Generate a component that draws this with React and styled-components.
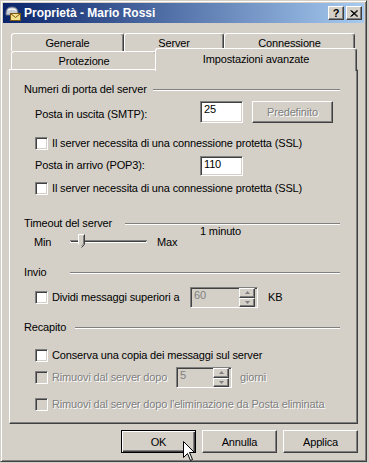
import React from 'react';
import styled, { createGlobalStyle, css } from 'styled-components';

const FONT = '"Liberation Sans", Arial, sans-serif';

const Global = createGlobalStyle`
  html, body { margin: 0; padding: 0; background: #d4d0c8; }
  body { font-family: ${FONT}; font-size: 11px; color: #000; overflow: hidden; }
`;

const raised = css`
  border: 1px solid;
  border-color: #fff #404040 #404040 #fff;
  box-shadow: inset -1px -1px #808080;
`;

const sunken = css`
  border: 1px solid;
  border-color: #808080 #fff #fff #808080;
  box-shadow: inset 1px 1px #404040, inset -1px -1px #d4d0c8;
`;

const Window = styled.div`
  position: relative;
  box-sizing: border-box;
  width: 367px;
  height: 462px;
  background: #d4d0c8;
  border: 1px solid;
  border-color: #d4d0c8 #404040 #404040 #d4d0c8;
  box-shadow: inset 1px 1px #fff, inset -1px -1px #808080;
  padding: 2px;
  display: flex;
  flex-direction: column;
`;

const TitleBar = styled.div`
  height: 20px;
  display: flex;
  align-items: center;
  padding: 0 2px 0 2px;
  background: linear-gradient(to right, #0a246a, #a6caf0);
`;

const TitleText = styled.span`
  flex: 1;
  margin-left: 3px;
  color: #fff;
  font: bold 12px ${FONT};
  white-space: nowrap;
`;

const CaptionButton = styled.div`
  box-sizing: border-box;
  width: 16px;
  height: 14px;
  margin-left: ${p => p.$ml || 0}px;
  background: #d4d0c8;
  ${raised};
  display: flex;
  align-items: center;
  justify-content: center;
  font: bold 11px ${FONT};
  line-height: 12px;
`;

const Body = styled.div`
  flex: 1;
  display: flex;
  flex-direction: column;
  padding: 10px 6px 0 6px;
  letter-spacing: -0.15px;
`;

const TabRow = styled.div`
  display: flex;
  height: 18px;
  margin-left: 2px;
`;

const Tab = styled.div`
  box-sizing: border-box;
  width: ${p => p.$w}px;
  height: 18px;
  flex: none;
  display: flex;
  align-items: center;
  justify-content: center;
  background: #d4d0c8;
  border-top: 1px solid #fff;
  border-left: 1px solid #fff;
  border-right: 1px solid #404040;
  box-shadow: inset -1px 0 #808080;
  border-radius: 3px 3px 0 0;
  white-space: nowrap;
`;

const ActiveTab = styled(Tab)`
  position: relative;
  z-index: 1;
  height: 23px;
  margin: -3px -2px 0 -2px;
  padding-bottom: 3px;
`;

const Panel = styled.div`
  box-sizing: border-box;
  height: 355px;
  border: 1px solid;
  border-color: #fff #404040 #404040 #fff;
  box-shadow: inset -1px -1px #808080;
  padding: 13px 17px 0 14px;
  display: flex;
  flex-direction: column;
`;

const GroupHead = styled.div`
  display: flex;
  align-items: center;
  height: 13px;
  line-height: 13px;
  margin-top: ${p => p.$mt || 0}px;
  white-space: nowrap;
`;

const GroupLabel = styled.span`
  width: ${p => p.$w}px;
  flex: none;
`;

const GroupRule = styled.div`
  flex: 1;
  border-top: 1px solid #808080;
  border-bottom: 1px solid #fff;
`;

const Row = styled.div`
  display: flex;
  align-items: ${p => p.$align || 'center'};
  height: ${p => p.$h}px;
  margin-top: ${p => p.$mt}px;
  margin-left: 11px;
  line-height: 13px;
  white-space: nowrap;
`;

const FieldLabel = styled.span`
  width: ${p => p.$w}px;
  flex: none;
  margin-top: ${p => p.$dy || 0}px;
`;

const Field = styled.div`
  box-sizing: border-box;
  width: ${p => p.$w}px;
  height: ${p => p.$h}px;
  flex: none;
  ${sunken};
  background: ${p => (p.$disabled ? '#d4d0c8' : '#fff')};
  color: ${p => (p.$disabled ? '#808080' : '#000')};
  padding: 1px 3px 0 3px;
  display: flex;
`;

const FieldValue = styled.span`
  flex: 1;
`;

const PushButton = styled.div`
  box-sizing: border-box;
  width: ${p => p.$w || 75}px;
  height: ${p => p.$h || 23}px;
  margin-left: ${p => p.$ml || 0}px;
  flex: none;
  background: #d4d0c8;
  display: flex;
  align-items: center;
  justify-content: center;
  color: ${p => (p.$disabled ? '#808080' : '#000')};
  text-shadow: ${p => (p.$disabled ? '1px 1px #fff' : 'none')};
  ${p =>
    p.$default
      ? css`
          border: 1px solid #000;
          box-shadow: inset 1px 1px #fff, inset -1px -1px #404040, inset -2px -2px #808080;
        `
      : raised};
`;

const CheckItem = styled.div`
  display: flex;
  align-items: center;
  width: ${p => (p.$w ? `${p.$w}px` : 'auto')};
  flex: none;
`;

const Box = styled.span`
  box-sizing: border-box;
  width: 13px;
  height: 13px;
  flex: none;
  ${sunken};
  background: ${p => (p.$disabled ? '#d4d0c8' : '#fff')};
`;

const CheckText = styled.span`
  margin-left: 4px;
  color: ${p => (p.$disabled ? '#808080' : '#000')};
  text-shadow: ${p => (p.$disabled ? '1px 1px #fff' : 'none')};
`;

const Aside = styled.span`
  margin-left: ${p => p.$ml}px;
  color: ${p => (p.$disabled ? '#808080' : '#000')};
  text-shadow: ${p => (p.$disabled ? '1px 1px #fff' : 'none')};
`;

const SpinButtons = styled.div`
  width: 16px;
  margin: -1px -1px 0 0;
  display: flex;
  flex-direction: column;
`;

const SpinButton = styled.div`
  box-sizing: border-box;
  flex: 1;
  ${raised};
  background: #d4d0c8;
  display: flex;
  align-items: center;
  justify-content: center;
`;

const SliderRow = styled.div`
  display: flex;
  height: 24px;
  margin-top: -5px;
  margin-left: 10px;
  line-height: 14px;
  white-space: nowrap;
`;

const SliderLabel = styled.span`
  width: ${p => p.$w}px;
  margin-left: ${p => p.$ml || 0}px;
  align-self: flex-end;
  flex: none;
`;

const SliderValue = styled.span`
  align-self: flex-start;
  line-height: 13px;
`;

const SliderArt = styled.svg`
  align-self: flex-end;
  flex: none;
`;

const Buttons = styled.div`
  display: flex;
  justify-content: flex-end;
  gap: 6px;
  margin-top: 6px;
`;

const Cursor = styled.svg`
  position: absolute;
  left: 182px;
  top: 440px;
`;

function TitleIcon() {
  return (
    <svg width="16" height="16" viewBox="0 0 16 16">
      <path d="M1 8 Q1 2 7 2 Q13 2 13 8 L13 10 L1 10 Z" fill="#c8ccd4" stroke="#6a7388" strokeWidth="1" />
      <path d="M3 5 Q7 3 11 5" fill="none" stroke="#fff" strokeWidth="1" />
      <rect x="5.5" y="8.5" width="10" height="7" fill="#f6e08a" stroke="#7a5a10" />
      <path d="M5.5 8.5 L10.5 12.5 L15.5 8.5" fill="none" stroke="#7a5a10" />
    </svg>
  );
}

function CloseGlyph() {
  return (
    <svg width="8" height="7" viewBox="0 0 8 7">
      <path d="M0.5 0.5 L7 6.5 M1.5 0.5 L8 6.5 M7 0.5 L0.5 6.5 M8 0.5 L1.5 6.5" stroke="#000" strokeWidth="1" />
    </svg>
  );
}

function Arrow({ up }) {
  return (
    <svg width="5" height="3" viewBox="0 0 5 3">
      <path d={up ? 'M2.5 0 L5 3 L0 3 Z' : 'M0 0 L5 0 L2.5 3 Z'} fill="#808080" />
    </svg>
  );
}

function Spinner({ value, w }) {
  return (
    <Field $w={w} $h={21} $disabled>
      <FieldValue>{value}</FieldValue>
      <SpinButtons>
        <SpinButton><Arrow up /></SpinButton>
        <SpinButton><Arrow /></SpinButton>
      </SpinButtons>
    </Field>
  );
}

function Check({ children, disabled, w }) {
  return (
    <CheckItem $w={w}>
      <Box $disabled={disabled} />
      <CheckText $disabled={disabled}>{children}</CheckText>
    </CheckItem>
  );
}

function Group({ label, w, mt }) {
  return (
    <GroupHead $mt={mt}>
      <GroupLabel $w={w}>{label}</GroupLabel>
      <GroupRule />
    </GroupHead>
  );
}

export default function App() {
  return (
    <>
      <Global />
      <Window>
        <TitleBar>
          <TitleIcon />
          <TitleText>Proprietà - Mario Rossi</TitleText>
          <CaptionButton>?</CaptionButton>
          <CaptionButton $ml={2}><CloseGlyph /></CaptionButton>
        </TitleBar>
        <Body>
          <TabRow>
            <Tab $w={113}>Generale</Tab>
            <Tab $w={100}>Server</Tab>
            <Tab $w={131}>Connessione</Tab>
          </TabRow>
          <TabRow>
            <Tab $w={146}>Protezione</Tab>
            <ActiveTab $w={202}>Impostazioni avanzate</ActiveTab>
          </TabRow>
          <Panel>
            <Group label="Numeri di porta del server" w={129} />
            <Row $h={22} $mt={5} $align="flex-start">
              <FieldLabel $w={165} $dy={7}>Posta in uscita (SMTP):</FieldLabel>
              <Field $w={43} $h={22}>
                <FieldValue>25</FieldValue>
              </Field>
              <PushButton $w={81} $h={22} $ml={9} $disabled>Predefinito</PushButton>
            </Row>
            <Row $h={13} $mt={14}>
              <Check>Il server necessita di una connessione protetta (SSL)</Check>
            </Row>
            <Row $h={20} $mt={6} $align="flex-start">
              <FieldLabel $w={165} $dy={3}>Posta in arrivo (POP3):</FieldLabel>
              <Field $w={43} $h={20}>
                <FieldValue>110</FieldValue>
              </Field>
            </Row>
            <Row $h={13} $mt={6}>
              <Check>Il server necessita di una connessione protetta (SSL)</Check>
            </Row>

            <Group label="Timeout del server" w={101} mt={22} />
            <SliderRow>
              <SliderLabel $w={36}>Min</SliderLabel>
              <SliderArt width="77" height="16" viewBox="0 0 77 16">
                <rect x="0" y="7" width="77" height="1" fill="#808080" />
                <rect x="1" y="8" width="75" height="1" fill="#404040" />
                <rect x="0" y="9" width="77" height="1" fill="#fff" />
                <path d="M8.5 1.5 L14.5 1.5 L14.5 11.5 L11.5 14.5 L8.5 11.5 Z" fill="#d4d0c8" />
                <path d="M8.5 11.5 L8.5 1.5 L14.5 1.5" fill="none" stroke="#fff" />
                <path d="M14.5 1.5 L14.5 11.5 L11.5 14.5" fill="none" stroke="#404040" />
                <path d="M13.5 2.5 L13.5 11 L11.5 13" fill="none" stroke="#808080" />
              </SliderArt>
              <SliderLabel $w={43} $ml={10}>Max</SliderLabel>
              <SliderValue>1 minuto</SliderValue>
            </SliderRow>

            <Group label="Invio" w={46} mt={17} />
            <Row $h={21} $mt={8}>
              <Check w={155}>Dividi messaggi superiori a</Check>
              <Spinner value="60" w={68} />
              <Aside $ml={10}>KB</Aside>
            </Row>

            <Group label="Recapito" w={51} mt={13} />
            <Row $h={13} $mt={15}>
              <Check>Conserva una copia dei messaggi sul server</Check>
            </Row>
            <Row $h={21} $mt={5}>
              <Check w={141} disabled>Rimuovi dal server dopo</Check>
              <Spinner value="5" w={56} />
              <Aside $ml={8} $disabled>giorni</Aside>
            </Row>
            <Row $h={13} $mt={10}>
              <Check disabled>Rimuovi dal server dopo l'eliminazione da Posta eliminata</Check>
            </Row>
          </Panel>
          <Buttons>
            <PushButton $default>OK</PushButton>
            <PushButton>Annulla</PushButton>
            <PushButton>Applica</PushButton>
          </Buttons>
        </Body>
        <Cursor width="13" height="21" viewBox="0 0 13 21">
          <path d="M0.5 0.5 L0.5 16.5 L4.5 12.5 L7.5 19.5 L9.5 18.5 L6.5 11.5 L11.5 11.5 Z" fill="#fff" stroke="#000" strokeWidth="1" />
        </Cursor>
      </Window>
    </>
  );
}
